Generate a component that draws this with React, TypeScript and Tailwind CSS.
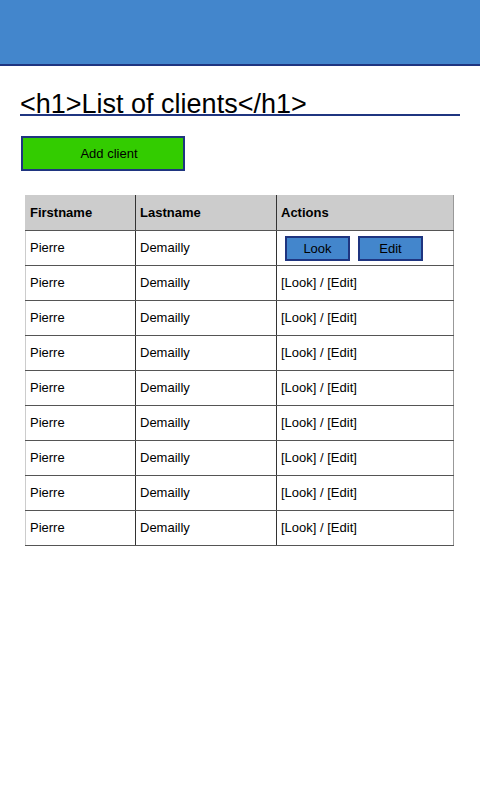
const rows = Array.from({ length: 9 }, () => ({ firstname: "Pierre", lastname: "Demailly" }));

export default function App() {
  return (
    <div className="min-h-[800px] bg-white font-['Liberation_Sans',Arial,sans-serif] text-black">
      <header className="h-[66px] border-b-2 border-[#1f3580] bg-[#4386cc]" />
      <main className="px-5">
        <h1 className="mt-[28px] border-b-2 border-[#1f3580] text-[27px] leading-[20px] font-normal">
          &lt;h1&gt;List of clients&lt;/h1&gt;
        </h1>
        <button className="mt-5 ml-px h-[35px] w-[164px] border-2 border-[#1f3580] bg-[#33cc00] pl-3 text-[13px]">
          Add client
        </button>
        <table className="mt-6 ml-[5px] w-[429px] border-collapse text-[13px]">
          <thead>
            <tr className="h-[35px] bg-[#cccccc] text-left font-bold">
              <th className="w-[110px] border-t border-l border-b border-r border-t-[#cccccc] border-l-[#cccccc] border-b-[#555] border-r-[#333] px-[4px]">
                Firstname
              </th>
              <th className="w-[141px] border-t border-b border-r border-t-[#cccccc] border-b-[#555] border-r-[#333] px-[4px]">
                Lastname
              </th>
              <th className="border-t border-b border-r border-t-[#cccccc] border-b-[#555] border-r-[#999] px-[4px]">
                Actions
              </th>
            </tr>
          </thead>
          <tbody>
            {rows.map((r, i) => (
              <tr key={i} className="h-[35px]">
                <td className="border-l border-b border-r border-l-[#cccccc] border-b-[#555] border-r-[#333] px-[4px]">
                  {r.firstname}
                </td>
                <td className="border-b border-r border-b-[#555] border-r-[#333] px-[4px]">{r.lastname}</td>
                <td className="border-b border-r border-b-[#555] border-r-[#999] px-[4px]">
                  {i === 0 ? (
                    <div className="flex gap-2 pl-1">
                      <button className="h-[25px] w-[65px] border-2 border-[#1f3580] bg-[#4386cc] pt-px text-[13px]">
                        Look
                      </button>
                      <button className="h-[25px] w-[65px] border-2 border-[#1f3580] bg-[#4386cc] pt-px text-[13px]">
                        Edit
                      </button>
                    </div>
                  ) : (
                    "[Look] / [Edit]"
                  )}
                </td>
              </tr>
            ))}
          </tbody>
        </table>
      </main>
    </div>
  );
}
